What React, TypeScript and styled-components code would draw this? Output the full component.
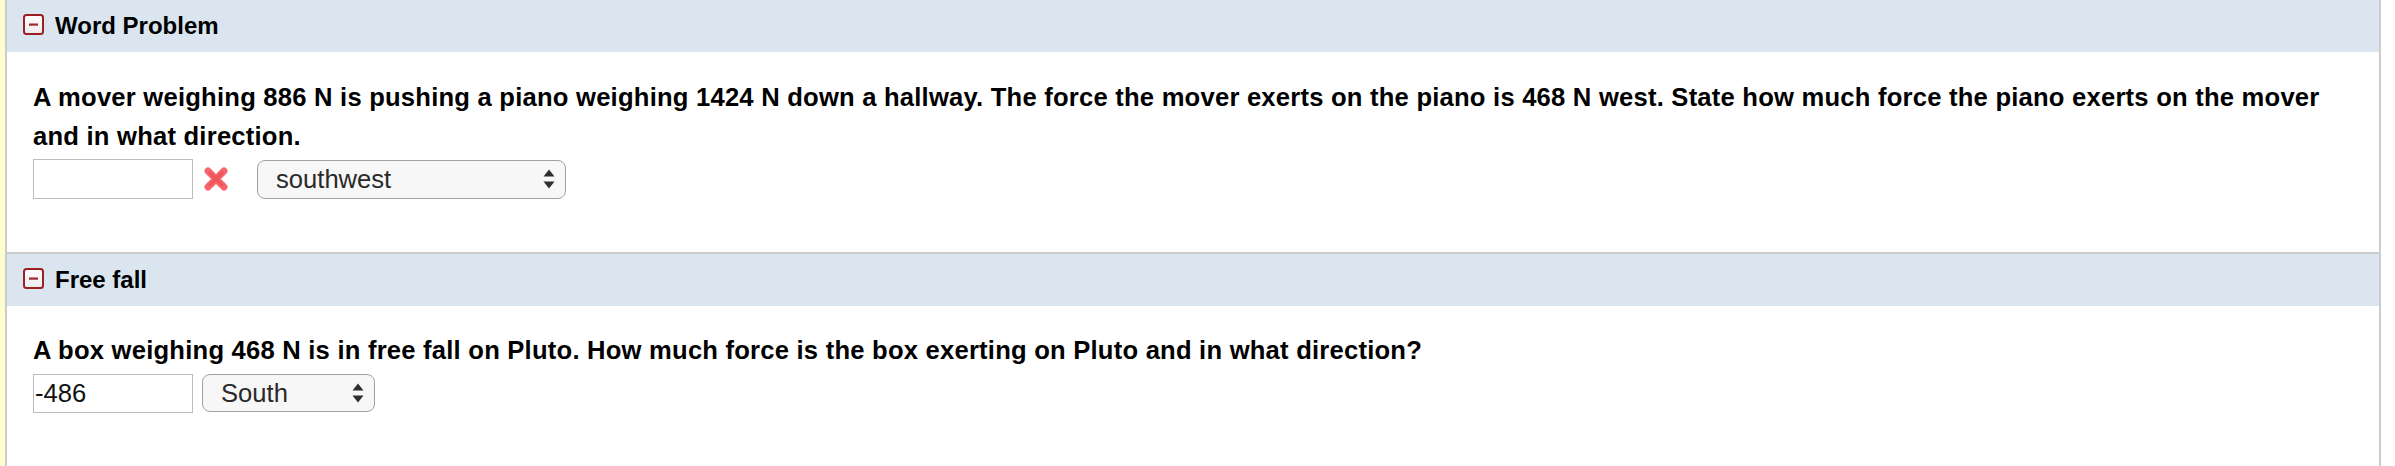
import React from "react";
import styled, { createGlobalStyle } from "styled-components";

const Global = createGlobalStyle`
  html, body { margin: 0; padding: 0; background: #ffffff; }
  body { font-family: "Liberation Sans", Arial, sans-serif; color: #000; }
`;

const Page = styled.div`
  display: flex;
  min-height: 466px;
  width: 2395px;
  box-sizing: border-box;
  padding-right: 14px;
`;

const Strip = styled.div`
  width: 5px;
  flex: none;
  background: #fffdd0;
`;

const Panel = styled.div`
  flex: 1;
  display: flex;
  flex-direction: column;
  border-left: 2px solid #cccccc;
  border-right: 2px solid #cccccc;
`;

const Section = styled.section<{ $last?: boolean }>`
  display: flex;
  flex-direction: column;
  flex: ${(p) => (p.$last ? 1 : "none")};
  border-bottom: ${(p) => (p.$last ? "none" : "2px solid #cccccc")};
`;

const Header = styled.div`
  height: 52px;
  flex: none;
  display: flex;
  align-items: center;
  gap: 11px;
  padding-left: 16px;
  background: #dae5ef;
  font-size: 24px;
  font-weight: bold;
`;

const Toggle = styled.svg`
  width: 21px;
  height: 21px;
  flex: none;
  margin-bottom: 3px;
`;

const Body = styled.div<{ $top: number; $bottom: number }>`
  padding: ${(p) => p.$top}px 40px ${(p) => p.$bottom}px 26px;
`;

const Question = styled.p`
  margin: 0;
  font-size: 25.6px;
  line-height: 39px;
  font-weight: bold;
  letter-spacing: 0.22px;
`;

const AnswerRow = styled.div`
  display: flex;
  align-items: center;
  margin-top: 3px;
  height: 40px;
`;

const TextInput = styled.input<{ $h: number }>`
  width: 160px;
  height: ${(p) => p.$h}px;
  box-sizing: border-box;
  border: 1px solid #bcbcbc;
  padding: 0 0 0 1px;
  margin: 0;
  font-family: "Liberation Sans", Arial, sans-serif;
  font-size: 25.6px;
  color: #111;
  background: #fff;
  outline: none;
`;

const WrongMark = styled.svg`
  width: 26px;
  height: 26px;
  flex: none;
  margin: 0 28px 0 10px;
`;

const Select = styled.div<{ $w: number; $h: number; $gap?: number }>`
  width: ${(p) => p.$w}px;
  height: ${(p) => p.$h}px;
  margin-left: ${(p) => p.$gap ?? 0}px;
  box-sizing: border-box;
  display: flex;
  align-items: center;
  justify-content: space-between;
  padding: 0 10px 0 18px;
  border: 1.5px solid #a2a2a2;
  border-radius: 8px;
  background: #f7f7f7;
  font-size: 25.6px;
  color: #2a2a2a;
  cursor: default;
`;

const Arrows = styled.svg`
  width: 12px;
  height: 20px;
  flex: none;
`;

const ToggleIcon = () => (
  <Toggle viewBox="0 0 21 21">
    <defs>
      <linearGradient id="tg" x1="0" y1="0" x2="0" y2="1">
        <stop offset="0" stopColor="#ffffff" />
        <stop offset="1" stopColor="#ececec" />
      </linearGradient>
    </defs>
    <rect x="1" y="1" width="19" height="19" rx="2.5" fill="url(#tg)" stroke="#9d1f24" strokeWidth="2" />
    <rect x="6" y="9.5" width="9" height="2.2" fill="#a3262b" />
  </Toggle>
);

const XMark = () => (
  <WrongMark viewBox="0 0 26 26">
    <g stroke="#f4666b" strokeWidth="7" strokeLinecap="round">
      <line x1="5" y1="5" x2="21" y2="21" />
      <line x1="21" y1="5" x2="5" y2="21" />
    </g>
    <g stroke="#ea4a51" strokeWidth="3" strokeLinecap="round" opacity="0.6">
      <line x1="7" y1="7" x2="19" y2="19" />
      <line x1="19" y1="7" x2="7" y2="19" />
    </g>
  </WrongMark>
);

const UpDown = () => (
  <Arrows viewBox="0 0 12 20">
    <path d="M6 0.5 L11.5 7.5 L0.5 7.5 Z" fill="#2f2f2f" />
    <path d="M0.5 12.5 L11.5 12.5 L6 19.5 Z" fill="#2f2f2f" />
  </Arrows>
);

export default function App() {
  return (
    <>
      <Global />
      <Page>
        <Strip />
        <Panel>
          <Section>
            <Header>
              <ToggleIcon />
              Word Problem
            </Header>
            <Body $top={26} $bottom={53}>
              <Question>
                A mover weighing 886 N is pushing a piano weighing 1424 N down a hallway. The force the mover
                exerts on the piano is 468 N west. State how much force the piano exerts on the mover and in what
                direction.
              </Question>
              <AnswerRow>
                <TextInput $h={40} defaultValue="" />
                <XMark />
                <Select $w={309} $h={39}>
                  <span>southwest</span>
                  <UpDown />
                </Select>
              </AnswerRow>
            </Body>
          </Section>
          <Section $last>
            <Header>
              <ToggleIcon />
              Free fall
            </Header>
            <Body $top={25} $bottom={20}>
              <Question>
                A box weighing 468 N is in free fall on Pluto. How much force is the box exerting on Pluto and in
                what direction?
              </Question>
              <AnswerRow>
                <TextInput $h={39} defaultValue="-486" />
                <Select $w={173} $h={38} $gap={9}>
                  <span>South</span>
                  <UpDown />
                </Select>
              </AnswerRow>
            </Body>
          </Section>
        </Panel>
      </Page>
    </>
  );
}
